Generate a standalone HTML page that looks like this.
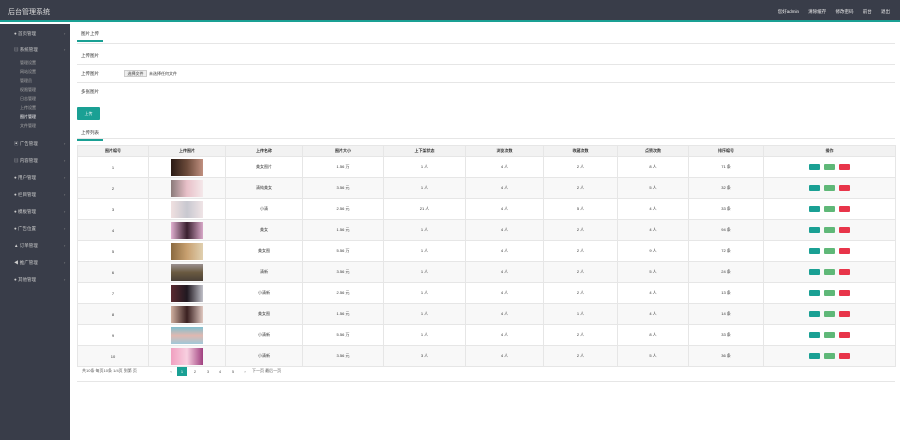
<!DOCTYPE html>
<html><head><meta charset="utf-8"><style>
*{margin:0;padding:0;box-sizing:border-box}
body{width:900px;height:440px;overflow:hidden;background:#fff;font-family:"Liberation Sans","Noto Sans CJK SC",sans-serif;font-size:5px;color:#333;position:relative}
.hd{position:absolute;left:0;top:0;width:900px;height:22px;background:#393d49;border-bottom:2px solid #1aa094}
.hd .t{position:absolute;left:8px;top:7px;color:#ddd;font-size:7px}
.hd .r{position:absolute;right:10px;top:9px;color:#eee;font-size:4.5px;word-spacing:8px}
.sb{position:absolute;left:0;top:24px;width:70px;height:416px;background:#393d49}
.sb div{position:absolute;left:14px;color:#ccc;font-size:4.5px}
.sb .s{left:20px;color:#aaa;font-size:4px}
.sb .a{position:absolute;left:64px;color:#999;font-size:4px}
.ct{position:absolute;left:70px;top:24px;width:830px;height:416px;background:#fff}
.tab{position:absolute;left:77px;top:28px;font-size:4.5px;padding:3px 4px;border-bottom:2px solid #1aa094}
.ln{position:absolute;left:77px;width:818px;height:1px;background:#e6e6e6}
.lb{position:absolute;left:81px;font-size:4.5px}
.btn{position:absolute;left:77px;top:107px;width:23px;height:13px;background:#1aa094;color:#fff;font-size:4px;text-align:center;line-height:13px;border-radius:1px}
table{position:absolute;left:77px;top:145px;width:818px;border-collapse:collapse;table-layout:fixed}
td,th{border:1px solid #e6e6e6;text-align:center;font-size:4px;font-weight:normal;height:21px}
th{height:11px;background:#f2f2f2;font-weight:bold}
tr:nth-child(odd) td{background:#f8f8f8}
.im{display:inline-block;width:32px;height:17px;vertical-align:middle}
.b{display:inline-block;width:11px;height:6px;margin:0 2px;vertical-align:middle;border-radius:1px}
.pg{position:absolute;left:82px;top:368px;font-size:4px;color:#555}
.pn{position:absolute;top:367px;width:10px;height:9px;font-size:4px;text-align:center;line-height:9px;color:#555}
</style></head><body>
<div class="hd"><div class="t">后台管理系统</div><div class="r">您好admin 清除缓存 修改密码 前台 退出</div></div>
<div class="sb">
<div style="top:7px">● 首页管理</div><span class="a" style="top:7px">›</span>
<div style="top:23px">▤ 系统管理</div><span class="a" style="top:23px">›</span>
<div class="s" style="top:36px">管理设置</div><div class="s" style="top:45px">网站设置</div><div class="s" style="top:54px">管理员</div><div class="s" style="top:63px">权限管理</div><div class="s" style="top:72px">日志管理</div><div class="s" style="top:81px">上传设置</div><div class="s" style="top:90px;color:#fff">图片管理</div><div class="s" style="top:99px">文件管理</div>
<div style="top:117px">▣ 广告管理</div><span class="a" style="top:117px">›</span>
<div style="top:134px">▤ 内容管理</div><span class="a" style="top:134px">›</span>
<div style="top:151px">● 用户管理</div><span class="a" style="top:151px">›</span>
<div style="top:168px">● 栏目管理</div><span class="a" style="top:168px">›</span>
<div style="top:185px">● 模板管理</div><span class="a" style="top:185px">›</span>
<div style="top:202px">● 广告位置</div><span class="a" style="top:202px">›</span>
<div style="top:219px">▲ 订单管理</div><span class="a" style="top:219px">›</span>
<div style="top:236px">◀ 推广管理</div><span class="a" style="top:236px">›</span>
<div style="top:253px">● 其他管理</div><span class="a" style="top:253px">›</span>
</div>
<div class="ct"></div>
<div class="tab">图片上传</div>
<div class="ln" style="top:43px"></div>
<div class="lb" style="top:53px">上传图片</div>
<div class="ln" style="top:64px"></div>
<div class="lb" style="top:71px">上传图片</div>
<div style="position:absolute;left:124px;top:70px;width:23px;height:7px;background:#eee;border:1px solid #ccc;font-size:4px;text-align:center">选择文件</div>
<div style="position:absolute;left:149px;top:71px;font-size:4px">未选择任何文件</div>
<div class="ln" style="top:82px"></div>
<div class="lb" style="top:89px">多张图片</div>
<div class="btn">上传</div>
<div class="tab" style="top:127px">上传列表</div>
<div class="ln" style="top:138px"></div>
<table>
<colgroup><col style="width:71px"><col style="width:77px"><col style="width:77px"><col style="width:81px"><col style="width:82px"><col style="width:78px"><col style="width:74px"><col style="width:71px"><col style="width:75px"><col style="width:132px"></colgroup>
<tr><th>图片编号</th><th>上传图片</th><th>上传名称</th><th>图片大小</th><th>上下架状态</th><th>浏览次数</th><th>收藏次数</th><th>点赞次数</th><th>排序编号</th><th>操作</th></tr>
<tr><td>1</td><td><span class="im" style="background:linear-gradient(90deg,#2a1a14,#6b4a3a,#c09080)"></span></td><td>美女图片</td><td>1.56 万</td><td>1 人</td><td>4 人</td><td>2 人</td><td>8 人</td><td>71 条</td><td><span class="b" style="background:#1aa094"></span><span class="b" style="background:#5fb878"></span><span class="b" style="background:#e8354a"></span></td></tr>
<tr><td>2</td><td><span class="im" style="background:linear-gradient(90deg,#8a7a7a,#e8c0c8,#f4e8ea)"></span></td><td>清纯美女</td><td>3.56 元</td><td>1 人</td><td>4 人</td><td>2 人</td><td>5 人</td><td>32 条</td><td><span class="b" style="background:#1aa094"></span><span class="b" style="background:#5fb878"></span><span class="b" style="background:#e8354a"></span></td></tr>
<tr><td>3</td><td><span class="im" style="background:linear-gradient(90deg,#f0e0e0,#c8c8d0,#f0e4e6)"></span></td><td>小清</td><td>2.56 元</td><td>21 人</td><td>4 人</td><td>5 人</td><td>4 人</td><td>33 条</td><td><span class="b" style="background:#1aa094"></span><span class="b" style="background:#5fb878"></span><span class="b" style="background:#e8354a"></span></td></tr>
<tr><td>4</td><td><span class="im" style="background:linear-gradient(90deg,#e0b0d0,#3a2030,#d8a8c8)"></span></td><td>美女</td><td>1.56 元</td><td>1 人</td><td>4 人</td><td>2 人</td><td>4 人</td><td>94 条</td><td><span class="b" style="background:#1aa094"></span><span class="b" style="background:#5fb878"></span><span class="b" style="background:#e8354a"></span></td></tr>
<tr><td>5</td><td><span class="im" style="background:linear-gradient(90deg,#8a6a40,#c8a070,#e0d0b0)"></span></td><td>美女图</td><td>5.56 万</td><td>1 人</td><td>4 人</td><td>2 人</td><td>9 人</td><td>72 条</td><td><span class="b" style="background:#1aa094"></span><span class="b" style="background:#5fb878"></span><span class="b" style="background:#e8354a"></span></td></tr>
<tr><td>6</td><td><span class="im" style="background:linear-gradient(180deg,#9a9090,#6a5a40,#4a4038)"></span></td><td>清新</td><td>3.56 元</td><td>1 人</td><td>4 人</td><td>2 人</td><td>5 人</td><td>24 条</td><td><span class="b" style="background:#1aa094"></span><span class="b" style="background:#5fb878"></span><span class="b" style="background:#e8354a"></span></td></tr>
<tr><td>7</td><td><span class="im" style="background:linear-gradient(90deg,#5a2a30,#201820,#c0c0c8)"></span></td><td>小清新</td><td>2.56 元</td><td>1 人</td><td>4 人</td><td>2 人</td><td>4 人</td><td>13 条</td><td><span class="b" style="background:#1aa094"></span><span class="b" style="background:#5fb878"></span><span class="b" style="background:#e8354a"></span></td></tr>
<tr><td>8</td><td><span class="im" style="background:linear-gradient(90deg,#d0b0a0,#3a2020,#e0c8c0)"></span></td><td>美女图</td><td>1.56 元</td><td>1 人</td><td>4 人</td><td>1 人</td><td>4 人</td><td>14 条</td><td><span class="b" style="background:#1aa094"></span><span class="b" style="background:#5fb878"></span><span class="b" style="background:#e8354a"></span></td></tr>
<tr><td>9</td><td><span class="im" style="background:linear-gradient(180deg,#80c0d0,#e0b8b0,#a0c8d8)"></span></td><td>小清新</td><td>5.56 万</td><td>1 人</td><td>4 人</td><td>2 人</td><td>8 人</td><td>33 条</td><td><span class="b" style="background:#1aa094"></span><span class="b" style="background:#5fb878"></span><span class="b" style="background:#e8354a"></span></td></tr>
<tr><td>10</td><td><span class="im" style="background:linear-gradient(90deg,#f0a0c0,#f8d0e0,#a04080)"></span></td><td>小清新</td><td>3.56 元</td><td>3 人</td><td>4 人</td><td>2 人</td><td>5 人</td><td>36 条</td><td><span class="b" style="background:#1aa094"></span><span class="b" style="background:#5fb878"></span><span class="b" style="background:#e8354a"></span></td></tr>
</table>
<div class="ln" style="top:381px"></div>
<div class="pg">共10条 每页10条 1/4页 到第 页</div>
<div class="pn" style="left:166px">‹</div>
<div class="pn" style="left:177px;background:#1aa094;color:#fff">1</div>
<div class="pn" style="left:190px">2</div>
<div class="pn" style="left:203px">3</div>
<div class="pn" style="left:215px">4</div>
<div class="pn" style="left:228px">5</div>
<div class="pn" style="left:240px">›</div>
<div class="pg" style="left:252px">下一页 最后一页</div>
</body></html>
